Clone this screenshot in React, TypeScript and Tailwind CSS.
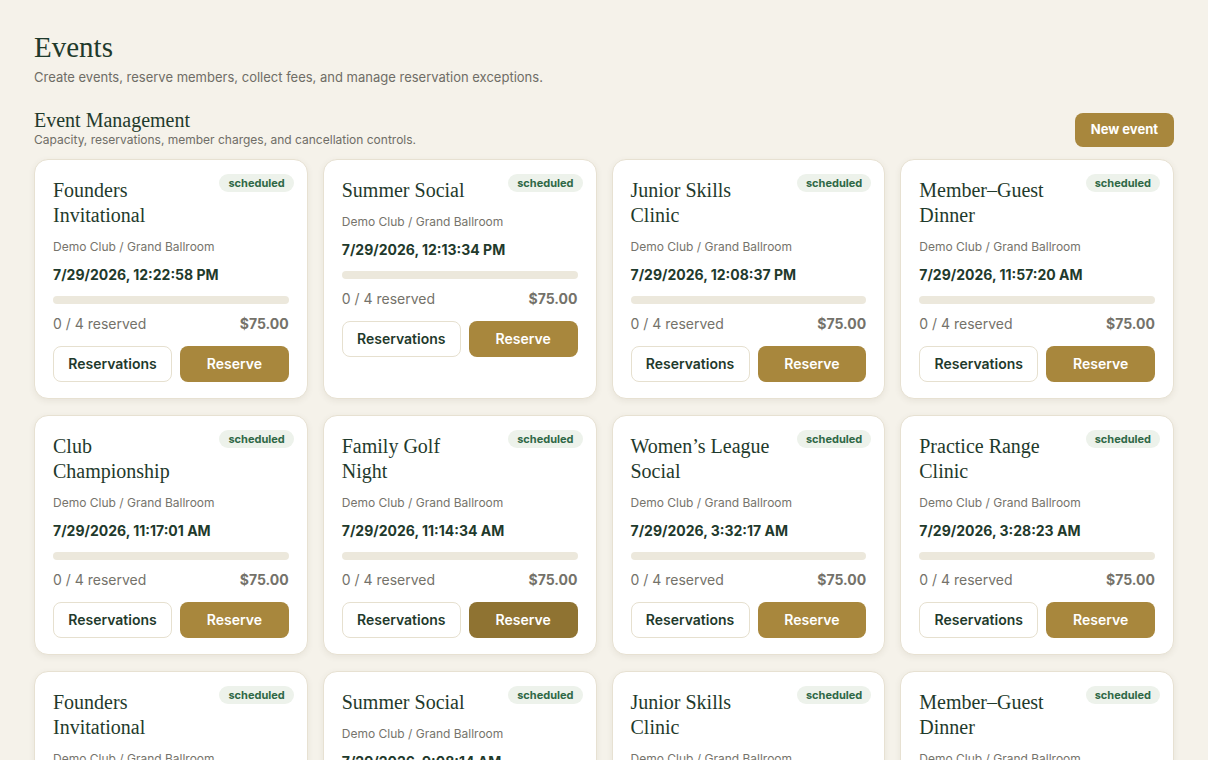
import React from 'react'

type EventItem = {
  title: string
  date: string
  active?: boolean
}

const events: EventItem[] = [
  { title: 'Founders\nInvitational', date: '7/29/2026, 12:22:58 PM' },
  { title: 'Summer Social', date: '7/29/2026, 12:13:34 PM' },
  { title: 'Junior Skills\nClinic', date: '7/29/2026, 12:08:37 PM' },
  { title: 'Member–Guest\nDinner', date: '7/29/2026, 11:57:20 AM' },
  { title: 'Club\nChampionship', date: '7/29/2026, 11:17:01 AM' },
  { title: 'Family Golf\nNight', date: '7/29/2026, 11:14:34 AM', active: true },
  { title: 'Women’s League\nSocial', date: '7/29/2026, 3:32:17 AM' },
  { title: 'Practice Range\nClinic', date: '7/29/2026, 3:28:23 AM' },
  { title: 'Founders\nInvitational', date: '7/29/2026, 9:22:58 AM' },
  { title: 'Summer Social', date: '7/29/2026, 9:08:14 AM' },
  { title: 'Junior Skills\nClinic', date: '7/29/2026, 8:58:37 AM' },
  { title: 'Member–Guest\nDinner', date: '7/29/2026, 8:47:20 AM' },
]

const serif = "font-['Liberation_Serif',serif]"

function EventCard({ ev }: { ev: EventItem }) {
  return (
    <div className="bg-white border border-[#e7e1d2] rounded-[14px] px-[18px] pt-[18px] pb-[16px] shadow-[0_2px_6px_rgba(80,70,40,0.08)] flex flex-col">
      <div className="flex justify-between items-start gap-2">
        <h3 className={`${serif} text-[20px] leading-[25px] text-[#1f3a2c] whitespace-pre-line`}>{ev.title}</h3>
        <span className="mt-[-4px] mr-[-5px] shrink-0 rounded-full bg-[#edf2eb] px-[9px] h-[18px] leading-[18px] text-[11px] font-bold text-[#2f6846]">
          scheduled
        </span>
      </div>
      <p className="mt-[11px] text-[12px] leading-4 text-[#76746c]">Demo Club / Grand Ballroom</p>
      <p className="mt-[10px] text-[14px] leading-5 font-bold text-[#1f3a2c]">{ev.date}</p>
      <div className="mt-[11px] h-2 w-full rounded-full bg-[#ece8dc]" />
      <div className="mt-[10px] flex justify-between items-center text-[14px] leading-5 text-[#74726a]">
        <span>0 / 4 reserved</span>
        <span className="font-bold">$75.00</span>
      </div>
      <div className="mt-3 flex gap-2">
        <button className="w-[119px] h-9 rounded-lg border border-[#e6e0cf] bg-white text-sm font-semibold text-[#1f3a2c]">
          Reservations
        </button>
        <button
          className={`flex-1 h-9 rounded-lg text-sm font-semibold text-white ${
            ev.active ? 'bg-[#8f7332]' : 'bg-[#a8873d]'
          }`}
        >
          Reserve
        </button>
      </div>
    </div>
  )
}

export default function App() {
  return (
    <div className="min-h-screen bg-[#f5f2ea] px-[34px] pt-[29px] pb-10 font-['Inter',sans-serif]">
      <h1 className={`${serif} text-[29px] leading-9 text-[#1f3a2c]`}>Events</h1>
      <p className="mt-[2px] text-[13px] leading-5 text-[#6f6d66]">
        Create events, reserve members, collect fees, and manage reservation exceptions.
      </p>

      <div className="mt-[21px] flex justify-between items-end">
        <div>
          <h2 className={`${serif} text-[20px] leading-6 text-[#1f3a2c]`}>Event Management</h2>
          <p className="text-[12px] leading-4 text-[#6f6d66]">
            Capacity, reservations, member charges, and cancellation controls.
          </p>
        </div>
        <button className="mb-[1px] h-[34px] px-4 rounded-lg bg-[#a8873d] text-[13px] font-bold text-white">
          New event
        </button>
      </div>

      <div className="mt-[11px] grid grid-cols-4 gap-x-[15px] gap-y-4">
        {events.map((ev, i) => (
          <EventCard key={i} ev={ev} />
        ))}
      </div>
    </div>
  )
}
